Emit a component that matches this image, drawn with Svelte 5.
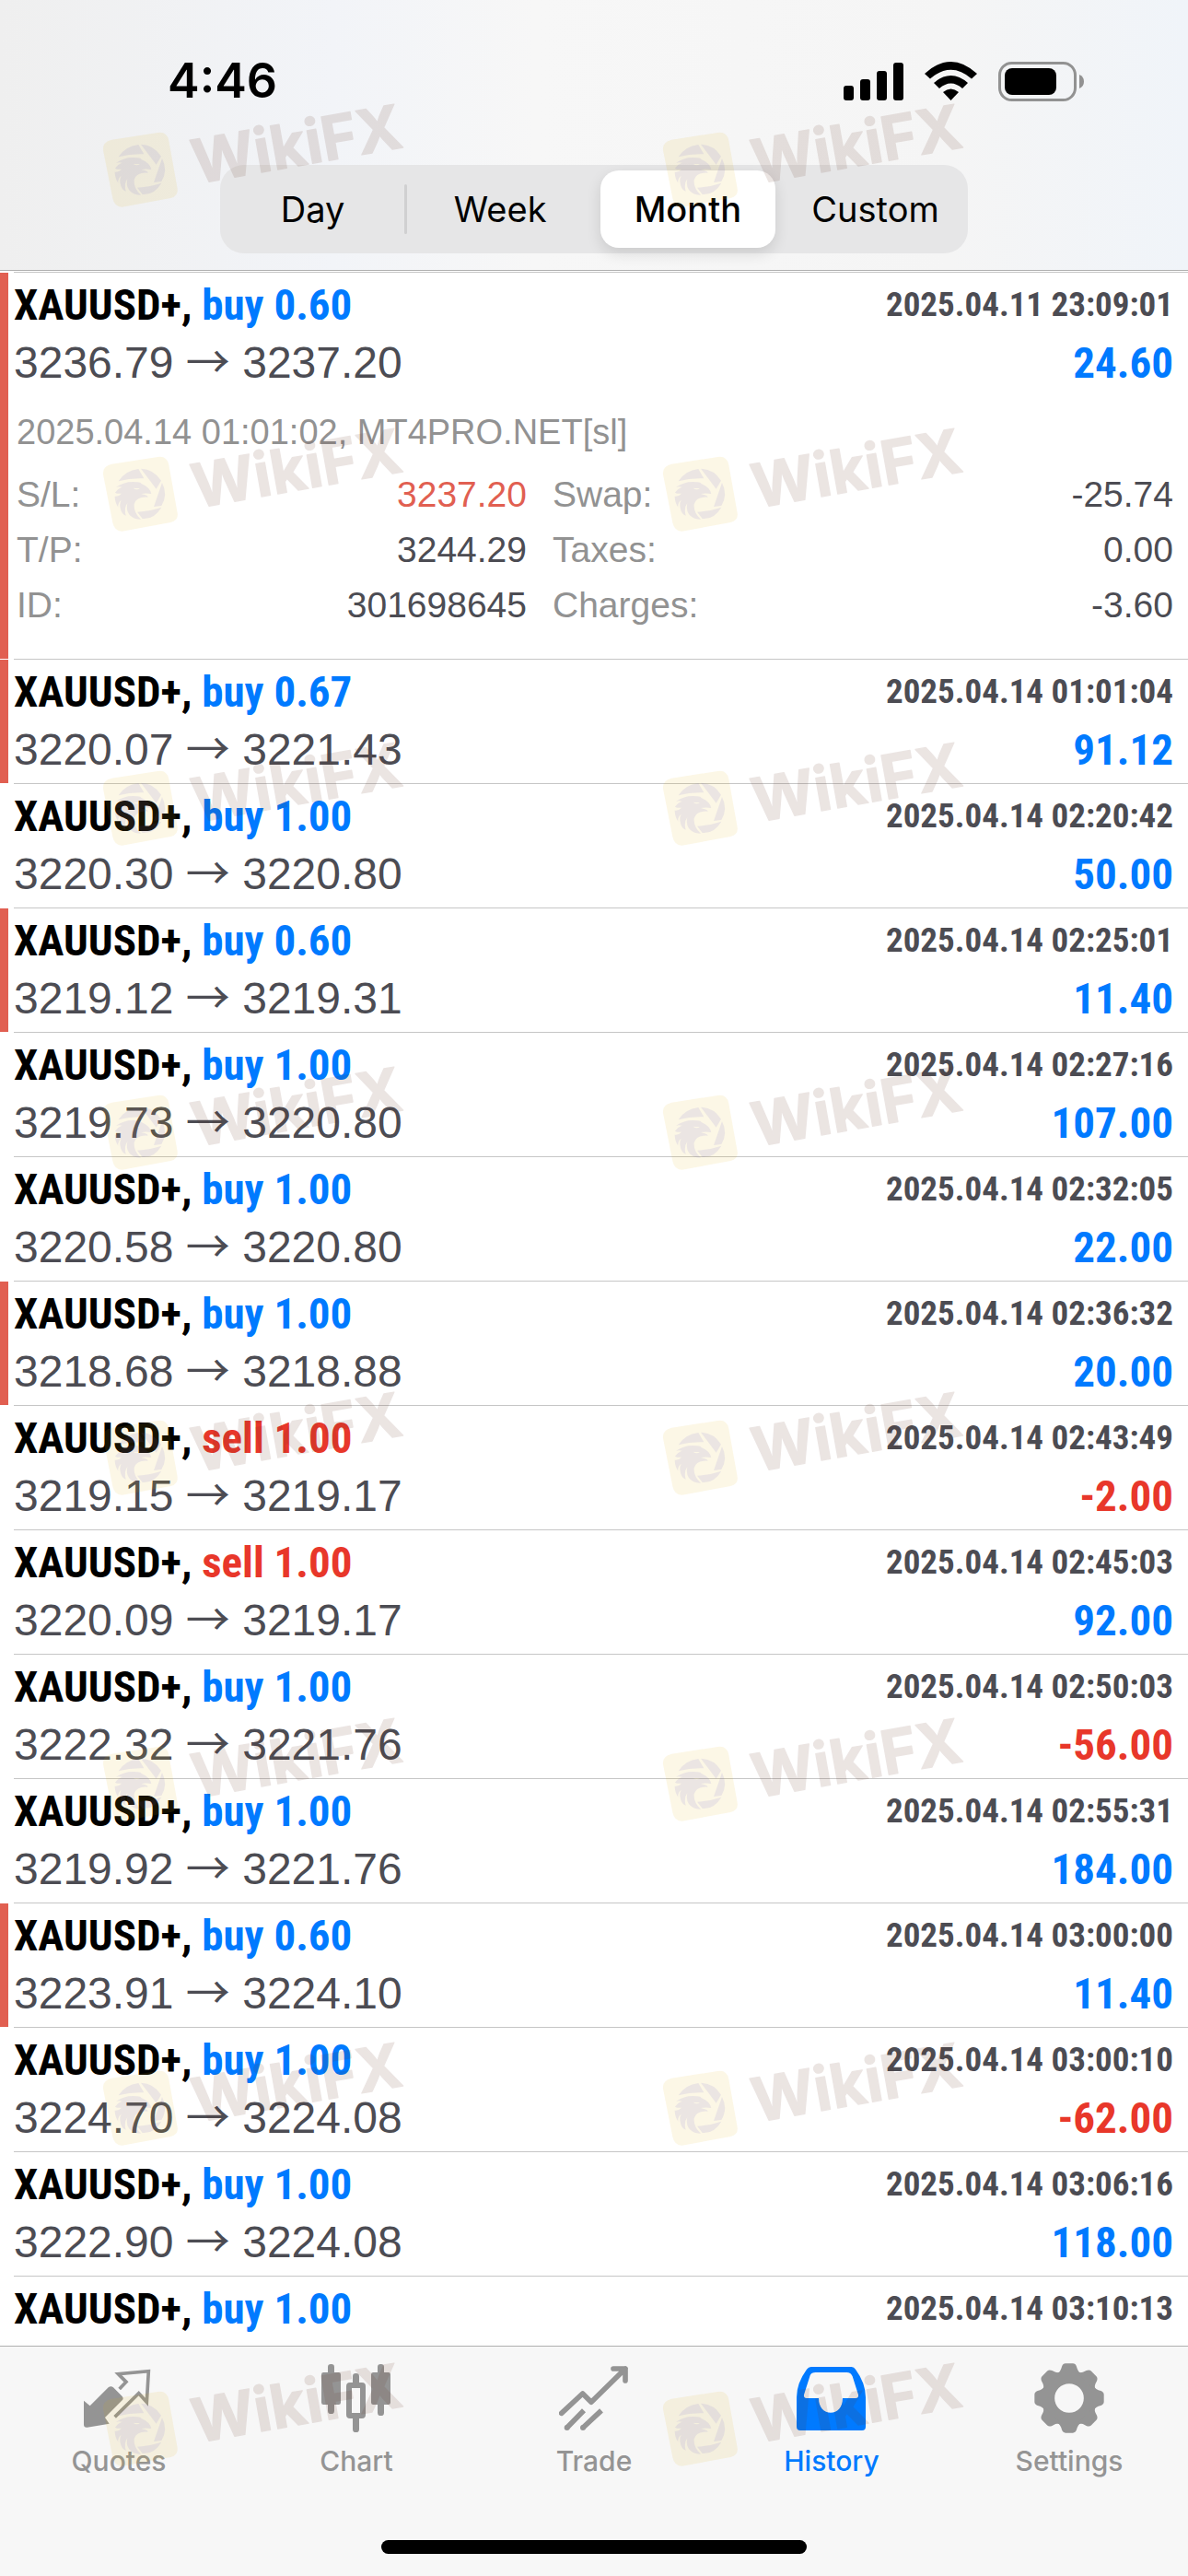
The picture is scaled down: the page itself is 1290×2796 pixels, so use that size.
<script>
  const periods = ['Day', 'Week', 'Month', 'Custom'];
  const tabs = ['Quotes', 'Chart', 'Trade', 'History', 'Settings'];
  let period = $state('Month');
  let tab = $state('History');

  const trades = [
    {
      side: 'buy', volume: '0.60', open: '3236.79', close: '3237.20', time: '2025.04.11 23:09:01', profit: '24.60', stopped: true,
      comment: '2025.04.14 01:01:02, MT4PRO.NET[sl]',
      details: [
        ['S/L:', '3237.20', true], ['Swap:', '-25.74'],
        ['T/P:', '3244.29'], ['Taxes:', '0.00'],
        ['ID:', '301698645'], ['Charges:', '-3.60']
      ]
    },
    { side: 'buy', volume: '0.67', open: '3220.07', close: '3221.43', time: '2025.04.14 01:01:04', profit: '91.12', stopped: true },
    { side: 'buy', volume: '1.00', open: '3220.30', close: '3220.80', time: '2025.04.14 02:20:42', profit: '50.00' },
    { side: 'buy', volume: '0.60', open: '3219.12', close: '3219.31', time: '2025.04.14 02:25:01', profit: '11.40', stopped: true },
    { side: 'buy', volume: '1.00', open: '3219.73', close: '3220.80', time: '2025.04.14 02:27:16', profit: '107.00' },
    { side: 'buy', volume: '1.00', open: '3220.58', close: '3220.80', time: '2025.04.14 02:32:05', profit: '22.00' },
    { side: 'buy', volume: '1.00', open: '3218.68', close: '3218.88', time: '2025.04.14 02:36:32', profit: '20.00', stopped: true },
    { side: 'sell', volume: '1.00', open: '3219.15', close: '3219.17', time: '2025.04.14 02:43:49', profit: '-2.00' },
    { side: 'sell', volume: '1.00', open: '3220.09', close: '3219.17', time: '2025.04.14 02:45:03', profit: '92.00' },
    { side: 'buy', volume: '1.00', open: '3222.32', close: '3221.76', time: '2025.04.14 02:50:03', profit: '-56.00' },
    { side: 'buy', volume: '1.00', open: '3219.92', close: '3221.76', time: '2025.04.14 02:55:31', profit: '184.00' },
    { side: 'buy', volume: '0.60', open: '3223.91', close: '3224.10', time: '2025.04.14 03:00:00', profit: '11.40', stopped: true },
    { side: 'buy', volume: '1.00', open: '3224.70', close: '3224.08', time: '2025.04.14 03:00:10', profit: '-62.00' },
    { side: 'buy', volume: '1.00', open: '3222.90', close: '3224.08', time: '2025.04.14 03:06:16', profit: '118.00' },
    { side: 'buy', volume: '1.00', time: '2025.04.14 03:10:13' }
  ];

  const markTops = [108, 460, 801, 1153, 1506, 1860, 2212, 2560];
  const marks = markTops.flatMap((top) => [{ top, left: 102 }, { top, left: 710 }]);
  const teeth = [0, 45, 90, 135, 180, 225, 270, 315];
</script>

<div class="app">
  <header>
    <div class="status">
      <span class="clock">4:46</span>
      <div class="indicators">
        <svg width="65" height="43" viewBox="0 0 65 43" aria-label="Signal">
          <rect x="0" y="26" width="11" height="16" rx="3" />
          <rect x="18" y="19" width="11" height="23" rx="3" />
          <rect x="36" y="10" width="11" height="32" rx="3" />
          <rect x="54" y="1" width="11" height="41" rx="3" />
        </svg>
        <svg width="57" height="43" viewBox="0 0 57 43" aria-label="Wi-Fi">
          <path d="M0 13 Q28.500 -13 57 13 L51 18.500 Q28.500 -1 6 18.500Z" />
          <path d="M10 23 Q28.500 7 47 23 L41 29 Q28.500 18 16 29Z" />
          <path d="M20 33 Q28.500 26 37 33 L28.500 42Z" />
        </svg>
        <svg width="93" height="43" viewBox="0 0 93 43" aria-label="Battery">
          <rect x="1.500" y="1.500" width="82" height="40" rx="13" fill="none" stroke="#929292" stroke-width="3" />
          <path d="M88 14 Q93 16 93 21.500 Q93 27 88 29Z" fill="#929292" />
          <rect x="7" y="7" width="56" height="29" rx="8" />
        </svg>
      </div>
    </div>
    <div class="segments" role="group" aria-label="Period">
      {#each periods as name}
        <button type="button" class:active={period === name} aria-pressed={period === name} onclick={() => (period = name)}>{name}</button>
      {/each}
    </div>
  </header>

  <main>
    <ul>
      {#each trades as t}
        <li class:stopped={t.stopped}>
          <span class="bar"></span>
          <div class="trade">
            <div class="line">
              <span class="title">XAUUSD+, <span class={t.side}>{t.side} {t.volume}</span></span>
              <time>{t.time}</time>
            </div>
            {#if t.open}
              <div class="line">
                <span class="price">{t.open} <span class="arrow">→</span> {t.close}</span>
                <span class="profit" class:loss={t.profit.startsWith('-')}>{t.profit}</span>
              </div>
            {/if}
            {#if t.details}
              <div class="more">
                <p>{t.comment}</p>
                <dl>
                  {#each t.details as [label, value, hit]}
                    <div><dt>{label}</dt><dd class:hit>{value}</dd></div>
                  {/each}
                </dl>
              </div>
            {/if}
          </div>
        </li>
      {/each}
    </ul>
  </main>

  <footer>
    <nav>
      {#each tabs as name}
        <button type="button" class:current={tab === name} onclick={() => (tab = name)}>
          {#if name === 'Quotes'}
            <svg viewBox="33 45 228 228">
              <path d="M33 167 L53 184 L113 124 Q121 117 129 124 L158 153 Q164 160 158 166 L102 222 L116 242 L44 254 Q33 255 33 245Z" />
              <path class="stroke" stroke-width="11" d="M149 129 L171 106 L145 80 L244 71 L238 172 L212 143 L134 220" />
            </svg>
          {:else if name === 'Chart'}
            <svg viewBox="807 45 228 228">
              <rect x="807" y="75" width="63" height="105" rx="7" />
              <rect x="828" y="48" width="21" height="162" rx="10" />
              <rect class="stroke" x="897" y="117" width="45" height="99" rx="3" stroke-width="18" />
              <rect x="909" y="78" width="21" height="40" rx="10" />
              <rect x="909" y="215" width="21" height="55" rx="10" />
              <rect x="969" y="75" width="63" height="105" rx="7" />
              <rect x="990" y="48" width="21" height="168" rx="10" />
            </svg>
          {:else if name === 'Trade'}
            <svg viewBox="51 45 228 228">
              <path class="stroke round" stroke-width="17" d="M59 208 L128 144 L156 172 L267 63 M228 63 H267 V102" />
              <path class="stroke" stroke-width="17" d="M77 255 L132 199 M129 255 L189 199" />
              <circle cx="77" cy="255" r="9" />
              <circle cx="129" cy="255" r="9" />
            </svg>
          {:else if name === 'History'}
            <svg viewBox="45 45 228 228">
              <path fill-rule="evenodd" d="M92 57 H224 Q232 57 237 65 Q270 110 270 156 V252 Q270 264 258 264 H57 Q45 264 45 252 V156 Q45 110 78 65 Q84 57 92 57Z M107 75 Q93 75 89 85 L69 148 Q67 159 78 159 H117 C117 190 135 206 156 206 C177 206 195 190 195 159 H237 Q248 159 246 148 L227 88 Q222 75 208 75Z" />
            </svg>
          {:else}
            <svg viewBox="-114 -114 228 228">
              <circle class="stroke" r="69" stroke-width="43" />
              {#each teeth as angle}
                <path transform="rotate({angle})" d="M-40 -78 Q-28 -86 -24 -103 Q-20 -113 -12 -113 H12 Q20 -113 24 -103 Q28 -86 40 -78Z" />
              {/each}
            </svg>
          {/if}
          <span>{name}</span>
        </button>
      {/each}
    </nav>
    <div class="home"></div>
  </footer>

  <div class="marks" aria-hidden="true">
    {#each marks as m}
      <svg style="top:{m.top}px;left:{m.left}px" viewBox="30 0 1050 360">
        <path class="plate" d="M88 131 L238 108 Q268 104 274 134 L302 290 Q306 314 280 321 L130 349 Q98 355 91 322 L60 165 Q57 138 88 131Z" />
        <g class="eagle">
          <path d="M110 187 Q132 152 175 147 L193 178 Q150 176 110 187Z" />
          <path d="M183 146 Q226 148 249 185 L233 212Z" />
          <path d="M252 192 Q272 230 250 267 L225 270Z" />
          <path d="M250 272 Q226 312 188 309 L171 287 Q215 284 250 272Z" />
          <path d="M102 206 Q135 184 172 190 Q182 190 186 196 Q211 206 217 228 Q196 224 184 229 Q204 231 206 239 Q168 236 161 262 Q159 290 183 311 Q157 312 144 294 Q134 280 139 258 Q127 275 134 299 Q121 294 117 278 Q112 262 119 248 Q107 258 109 272 Q98 255 98 236 Q110 238 120 227 Q106 229 99 224 Q108 210 122 206 Q112 203 102 206Z M158 209 Q168 218 180 210 Q168 211 158 209Z" fill-rule="evenodd" />
        </g>
        <g class="word"><text transform="translate(362 275) rotate(-10)">WikiFX</text></g>
      </svg>
    {/each}
  </div>
</div>

<style>
  :global(body) { margin: 0; background: #fff; }
  .app {
    position: relative;
    display: flex;
    flex-direction: column;
    height: 100vh;
    overflow: hidden;
    background: #fff;
    color: #4c4c53;
    font-family: 'Liberation Sans', Arial, sans-serif;
  }
  button { border: 0; margin: 0; padding: 0; background: none; font: inherit; color: inherit; }
  header {
    padding: 59px 0 18px;
    border-bottom: 1px solid #b0b0b0;
    background: linear-gradient(90deg, #efefef, #f2f4f8 28%, #f7f7f7 45%, #f5f5f5 80%, #f0f4f9);
    font-family: Inter, sans-serif;
  }
  .status {
    display: flex;
    justify-content: space-between;
    align-items: center;
    padding: 0 113px 0 182px;
    margin-bottom: 62px;
    color: #000;
  }
  .clock { font-size: 52px; line-height: 58px; font-weight: 600; }
  .indicators { display: flex; gap: 23px; }
  .segments {
    box-sizing: border-box;
    display: grid;
    grid-template-columns: repeat(4, 1fr);
    gap: 14px;
    width: 63%;
    height: 96px;
    margin: 0 auto;
    padding: 6px;
    border-radius: 26px;
    background: #e6e6e7;
  }
  .segments button { position: relative; border-radius: 20px; font-size: 38px; color: #000; }
  .segments button:first-child::after {
    content: '';
    position: absolute;
    top: 15px;
    right: -8px;
    width: 3px;
    height: 54px;
    border-radius: 2px;
    background: #d0d0d1;
  }
  .segments .active { background: #fff; font-weight: 500; box-shadow: 0 6px 16px rgb(0 0 0 / 12%); }

  main { flex: 1; min-height: 0; overflow: hidden; padding-top: 1px; }
  ul { list-style: none; margin: 0; padding: 0; }
  li { display: flex; gap: 6px; }
  .bar { flex: none; width: 9px; margin-top: 1px; }
  .stopped .bar { background: #e15f51; }
  .trade { flex: 1; padding: 3px 16px 5px 0; border-top: 1px solid #c6c6c6; }
  .line { display: flex; justify-content: space-between; line-height: 63px; white-space: nowrap; }
  .title, time, .profit { font-family: 'Roboto Condensed', 'Liberation Sans', sans-serif; font-weight: 700; }
  .title { font-size: 47px; color: #000; }
  .buy, .profit { color: #007aff; }
  .sell, .profit.loss { color: #e8372a; }
  time { font-size: 37px; }
  .price { font-size: 48px; }
  .arrow { font-family: 'Noto Sans CJK SC', sans-serif; line-height: 1; }
  .profit { font-size: 47px; }
  .more { padding: 14px 0 23px 3px; font-size: 39px; line-height: 60px; }
  .more p { margin: 0 0 8px; color: #929292; font-size: 38px; }
  dl { display: grid; grid-template-columns: 554fr 674fr; column-gap: 28px; margin: 0; }
  dl div { display: flex; justify-content: space-between; }
  dt { color: #929292; }
  dd { margin: 0; }
  .hit { color: #e15f51; }

  footer {
    box-sizing: border-box;
    height: 250px;
    padding: 18px 0 24px;
    border-top: 1px solid #b0b0b0;
    background: #f7f7f7;
    display: flex;
    flex-direction: column;
    justify-content: space-between;
  }
  nav { display: grid; grid-template-columns: repeat(5, 1fr); font-family: Inter, sans-serif; }
  nav button { display: flex; flex-direction: column; align-items: center; gap: 12px; color: #949494; font-size: 30px; line-height: 36px; font-weight: 500; }
  nav .current { color: #007aff; }
  nav svg { width: 76px; height: 76px; fill: currentColor; }
  .stroke { fill: none; stroke: currentColor; }
  .round { stroke-linecap: round; stroke-linejoin: round; }
  .home { width: 462px; height: 15px; margin: 0 auto; border-radius: 8px; background: #000; }

  .marks { position: absolute; inset: 0; pointer-events: none; }
  .marks svg { position: absolute; width: 350px; height: 120px; overflow: visible; }
  .plate { fill: rgb(225 175 5 / 10%); }
  .eagle { fill: rgb(92 77 210 / 10%); }
  .word { opacity: 0.12; }
  .word text { font: 700 198px Inter, sans-serif; fill: #612f1e; stroke: #612f1e; stroke-width: 4px; stroke-linejoin: round; }
</style>
